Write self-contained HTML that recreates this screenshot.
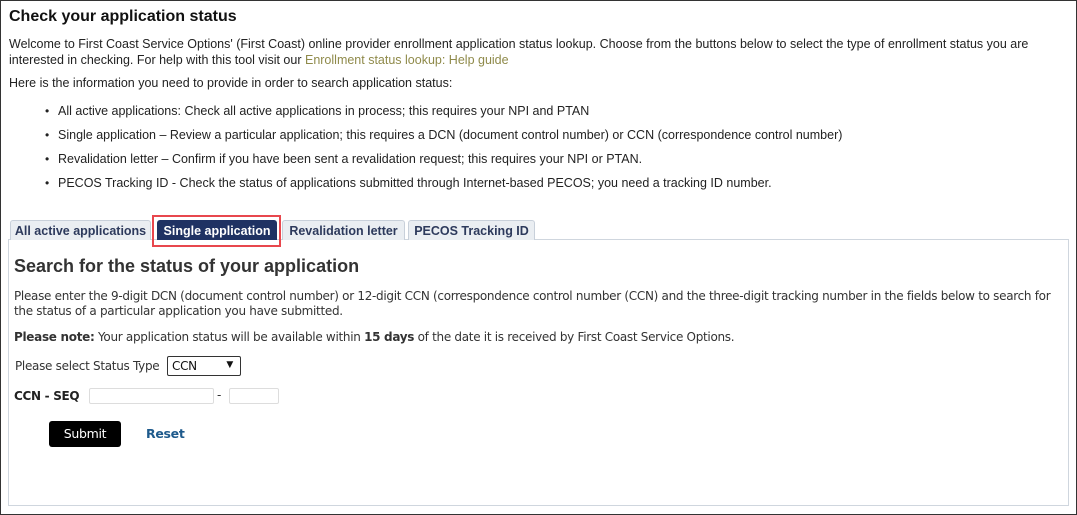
<!DOCTYPE html>
<html><head><style>
*{margin:0;padding:0;box-sizing:border-box}
body{width:1077px;height:515px;overflow:hidden;background:#fff;font-family:"Liberation Sans",Arial,sans-serif;color:#222;position:relative}
.frame{position:absolute;left:0;top:0;width:1077px;height:515px;border:1px solid #333}
.a{position:absolute;white-space:nowrap}
h1{position:absolute;left:9px;top:8px;font-size:16px;font-weight:bold;color:#111}
.p{font-size:12.5px;color:#222}
.link{color:#8f8a4a}
.li{font-size:12.5px}
.li:before{content:"•";position:absolute;left:-13px;font-size:12px;top:0px}
.tab{position:absolute;top:220px;height:20px;border:1px solid #c8d0da;border-bottom:none;background:#eaeef2;border-radius:3px 3px 0 0;font-size:12.5px;font-weight:bold;color:#2d3a5c;padding:3px 0 0;text-align:center;white-space:nowrap;overflow:hidden;font-family:"Liberation Sans",Arial,sans-serif}
.box{position:absolute;left:8px;top:239px;width:1061px;height:267px;border:1px solid #cfd6de}
.q{font-family:"DejaVu Sans",sans-serif;font-size:12px;color:#333;letter-spacing:-0.3px}
input{position:absolute;height:16px;border:1px solid #ddd;border-radius:2px;background:#fff}
</style></head><body>
<div class="frame"></div>
<h1>Check your application status</h1>
<div class="a p" style="left:9px;top:37px">Welcome to First Coast Service Options' (First Coast) online provider enrollment application status lookup. Choose from the buttons below to select the type of enrollment status you are</div>
<div class="a p" style="left:9px;top:53px">interested in checking. For help with this tool visit our <span class="link">Enrollment status lookup: Help guide</span></div>
<div class="a p" style="left:9px;top:76px">Here is the information you need to provide in order to search application status:</div>
<div class="a li" style="left:58px;top:104px">All active applications: Check all active applications in process; this requires your NPI and PTAN</div>
<div class="a li" style="left:58px;top:128px">Single application – Review a particular application; this requires a DCN (document control number) or CCN (correspondence control number)</div>
<div class="a li" style="left:58px;top:152px">Revalidation letter – Confirm if you have been sent a revalidation request; this requires your NPI or PTAN.</div>
<div class="a li" style="left:58px;top:176px">PECOS Tracking ID - Check the status of applications submitted through Internet-based PECOS; you need a tracking ID number.</div>
<div class="box"></div>
<div class="tab" style="left:10px;width:141px">All active applications</div>
<div class="a" style="left:152px;top:215px;width:129px;height:32px;border:2px solid #e8474d"></div>
<div class="tab" style="left:157px;top:220px;width:120px;background:#1f3263;color:#fff;border-color:#1f3263">Single application</div>
<div class="tab" style="left:282px;width:123px">Revalidation letter</div>
<div class="tab" style="left:408px;width:127px">PECOS Tracking ID</div>
<div class="a" style="left:14px;top:256px;font-size:18px;font-weight:bold;color:#333">Search for the status of your application</div>
<div class="a q" style="left:14px;top:289px">Please enter the 9-digit DCN (document control number) or 12-digit CCN (correspondence control number (CCN) and the three-digit tracking number in the fields below to search for</div>
<div class="a q" style="left:14px;top:304px">the status of a particular application you have submitted.</div>
<div class="a q" style="left:14px;top:330px"><b>Please note:</b> Your application status will be available within <b>15 days</b> of the date it is received by First Coast Service Options.</div>
<div class="a q" style="left:15px;top:359px">Please select Status Type</div>
<div class="a q" style="left:167px;top:356px;width:74px;height:20px;border:1px solid #333;border-radius:2px;padding:2px 4px;color:#111">CCN<span style="position:absolute;right:7px;top:3px;font-size:9px">▼</span></div>
<div class="a q" style="left:14px;top:389px;font-weight:bold;color:#222">CCN - SEQ</div>
<input style="left:89px;top:388px;width:125px">
<div class="a q" style="left:217px;top:388px">-</div>
<input style="left:229px;top:388px;width:50px">
<div class="a" style="left:49px;top:421px;width:72px;height:26px;background:#000;border-radius:3px;color:#fff;font-size:12.5px;text-align:center;line-height:26px;font-family:'DejaVu Sans',sans-serif;letter-spacing:-0.3px">Submit</div>
<div class="a" style="left:146px;top:426px;font-size:12.5px;font-weight:bold;color:#1e5a8c;font-family:'DejaVu Sans',sans-serif;letter-spacing:-0.3px">Reset</div>
</body></html>
